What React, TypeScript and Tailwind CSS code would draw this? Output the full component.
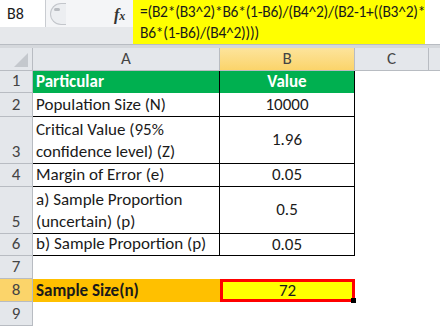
import React from "react";

const font = { fontFamily: "Carlito, 'Open Sans', 'Liberation Sans', sans-serif" };

type Row = { n: string; h: number; a?: string[]; b?: string; kind?: "head" | "data" | "empty" | "result" };

const rows: Row[] = [
  { n: "1", h: 22, a: ["Particular"], b: "Value", kind: "head" },
  { n: "2", h: 24, a: ["Population Size (N)"], b: "10000", kind: "data" },
  { n: "3", h: 47, a: ["Critical Value (95%", "confidence level) (Z)"], b: "1.96", kind: "data" },
  { n: "4", h: 23, a: ["Margin of Error (e)"], b: "0.05", kind: "data" },
  { n: "5", h: 47, a: ["a) Sample Proportion", "(uncertain) (p)"], b: "0.5", kind: "data" },
  { n: "6", h: 22, a: ["b) Sample Proportion (p)"], b: "0.05", kind: "data" },
  { n: "7", h: 23, kind: "empty" },
  { n: "8", h: 23, a: ["Sample Size(n)"], b: "72", kind: "result" },
  { n: "9", h: 24, kind: "empty" },
];

export default function App() {
  return (
    <div className="w-[440px] h-[326px] overflow-hidden bg-white text-[17px] text-[#1a1a1a]" style={font}>
      {/* formula bar */}
      <div className="flex h-[44px] bg-[#eef0f3]">
        <div className="w-[46px] flex flex-col">
          <div className="h-[27px] bg-white border-r border-[#c9ccd1] flex items-center pl-[7px] text-[16px]">B8</div>
          <div className="flex-1 bg-[#e6e8eb]" />
        </div>
        <div className="w-[87px] relative bg-[#f4f5f7]">
          <div className="absolute left-[4px] top-[3px] w-[16px] h-[22px] rounded-l-full border border-[#c3c6cb] border-r-0 bg-[#eceef1]" />
          <div className="absolute left-[8px] top-[8px] w-[6px] h-[3px] rounded-full bg-[#b9bcc1]" />
          <div className="absolute left-[68px] top-[3px] italic font-bold text-[16px] text-[#333]" style={{ fontFamily: "'Liberation Serif', serif" }}>
            f<span className="text-[12px]">x</span>
          </div>
          <div className="absolute left-0 right-0 bottom-0 h-[17px] bg-[#e6e8eb]" />
        </div>
        <div className="w-[292px] bg-[#ffff00] pl-[7px] pt-[1px] leading-[21px] text-[15.5px] tracking-[-0.25px] whitespace-nowrap">
          <div>=(B2*(B3^2)*B6*(1-B6)/(B4^2)/(B2-1+((B3^2)*</div>
          <div>B6*(1-B6)/(B4^2))))</div>
        </div>
        <div className="flex-1 bg-white" />
      </div>
      <div className="h-[4px] bg-[#d5d8dc] border-t border-[#b8bcc2]" />
      {/* column header */}
      <div className="flex h-[23px] bg-[#e4e7eb] border-b border-[#b8bcc2] text-[17px] text-[#444]">
        <div className="w-[33px] border-r border-[#b8bcc2] relative">
          <div className="absolute right-[4px] bottom-[3px] w-0 h-0 border-l-[14px] border-l-transparent border-b-[14px] border-b-[#c4c8cd]" />
        </div>
        <div className="w-[187px] border-r border-[#b8bcc2] flex items-center justify-center">A</div>
        <div className="w-[135px] border-r border-[#b8bcc2] bg-gradient-to-b from-[#fde49b] to-[#fbd46a] flex items-center justify-center">B</div>
        <div className="w-[74px] border-r border-[#b8bcc2] flex items-center justify-center">C</div>
        <div className="flex-1" />
      </div>
      {rows.map((r) => (
        <div key={r.n} className="flex" style={{ height: r.h }}>
          <div
            className={`w-[33px] shrink-0 border-r border-b border-[#b8bcc2] flex items-end justify-center leading-[22px] text-[17px] text-[#444] ${
              r.kind === "result" ? "bg-[#fbd46a]" : "bg-[#e4e7eb]"
            }`}
          >
            {r.n}
          </div>
          {r.kind === "head" && (
            <>
              <div className="w-[187px] bg-[#00b050] text-white font-bold flex items-center pl-[3px] border-r border-black">Particular</div>
              <div className="w-[135px] bg-[#00b050] text-white font-bold flex items-center justify-center border-r border-black">Value</div>
            </>
          )}
          {r.kind === "data" && (
            <>
              <div className="w-[187px] border-r border-b border-black flex flex-col justify-end pl-[3px] leading-[22px] whitespace-nowrap">
                {r.a!.map((t) => (
                  <div key={t}>{t}</div>
                ))}
              </div>
              <div className="w-[135px] border-r border-b border-black flex items-center justify-center">{r.b}</div>
            </>
          )}
          {r.kind === "result" && (
            <>
              <div className="w-[187px] bg-[#ffc000] font-bold flex items-center pl-[3px]">Sample Size(n)</div>
              <div className="w-[135px] relative bg-[#ffff00] border-[3px] border-[#ff0000] flex items-center justify-center">
                72
                <div className="absolute right-[-4px] bottom-[-4px] w-[5px] h-[5px] bg-black" />
              </div>
            </>
          )}
          {r.kind === "empty" && <div className="w-[322px]" />}
          <div className="flex-1" />
        </div>
      ))}
    </div>
  );
}
